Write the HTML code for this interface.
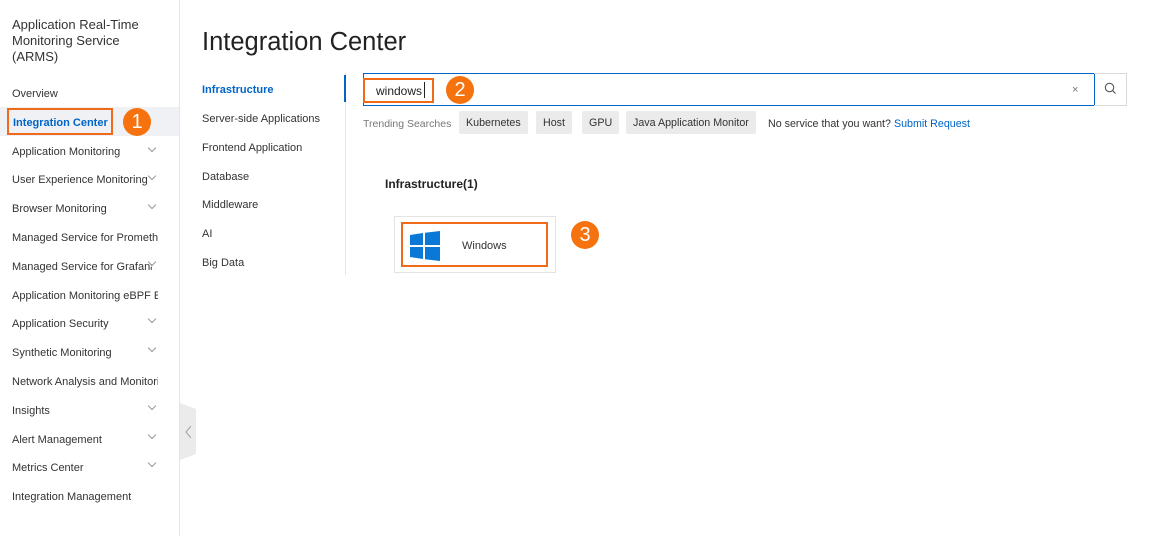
<!DOCTYPE html>
<html><head><meta charset="utf-8"><style>
*{margin:0;padding:0;box-sizing:border-box}
body{width:1153px;height:536px;background:#fff;font-family:"Liberation Sans",sans-serif;color:#333;position:relative;overflow:hidden;font-size:11px}
.a{position:absolute;white-space:nowrap}
.side{position:absolute;left:0;top:0;width:180px;height:536px;border-right:1px solid #e5e5e5}
.side .a{margin-top:1px}
.chev{position:absolute;left:149px;width:6px;height:6px;border-right:1px solid #999;border-bottom:1px solid #999;transform:rotate(45deg)}
.badge{position:absolute;width:28px;height:28px;border-radius:50%;background:#f5720f;color:#fff;font-size:20px;text-align:center;line-height:28px}
.tag{position:absolute;top:111px;height:23px;background:#ebebeb;border-radius:2px;line-height:24px;padding:0 7px;color:#333;font-size:10.7px}
</style></head><body>
<div class="side">
<div class="a" style="left:12px;top:16px;font-size:13px;line-height:16px;color:#333">Application Real-Time<br>Monitoring Service<br>(ARMS)</div>
<div class="a" style="left:12px;top:87px">Overview</div>
<div class="a" style="left:0;top:107px;width:179px;height:29px;background:#eff1f4;margin-top:0"></div>
<div class="a" style="left:7px;top:108px;width:106px;height:27px;border:2px solid #f06a1a;margin-top:0"></div>
<div class="a" style="left:13px;top:116px;color:#0064c8;font-weight:bold">Integration Center</div>
<div class="a" style="left:12px;top:145px">Application Monitoring</div><div class="chev" style="top:145px"></div>
<div class="a" style="left:12px;top:173px">User Experience Monitoring</div><div class="chev" style="top:173px"></div>
<div class="a" style="left:12px;top:202px">Browser Monitoring</div><div class="chev" style="top:202px"></div>
<div class="a" style="left:12px;top:231px;width:146px;overflow:hidden">Managed Service for Prometheus</div>
<div class="a" style="left:12px;top:260px;width:140px;overflow:hidden">Managed Service for Grafana</div><div class="chev" style="top:259px"></div>
<div class="a" style="left:12px;top:289px;width:146px;overflow:hidden">Application Monitoring eBPF Edition</div>
<div class="a" style="left:12px;top:317px">Application Security</div><div class="chev" style="top:316px"></div>
<div class="a" style="left:12px;top:346px">Synthetic Monitoring</div><div class="chev" style="top:345px"></div>
<div class="a" style="left:12px;top:375px;width:146px;overflow:hidden">Network Analysis and Monitoring</div>
<div class="a" style="left:12px;top:404px">Insights</div><div class="chev" style="top:403px"></div>
<div class="a" style="left:12px;top:433px">Alert Management</div><div class="chev" style="top:432px"></div>
<div class="a" style="left:12px;top:461px">Metrics Center</div><div class="chev" style="top:460px"></div>
<div class="a" style="left:12px;top:490px">Integration Management</div>
</div>
<div class="badge" style="left:123px;top:108px">1</div>
<svg class="a" style="left:180px;top:403px" width="17" height="57"><polygon points="0,0 16,6 16,51 0,57" fill="#ebebeb"/><polyline points="11,23 6,29 11,35" fill="none" stroke="#aaa" stroke-width="1.2"/></svg>
<div class="a" style="left:202px;top:28px;font-size:25.5px;color:#222">Integration Center</div>
<div class="a" style="left:202px;top:84px;color:#0064c8;font-weight:bold">Infrastructure</div>
<div class="a" style="left:202px;top:113px">Server-side Applications</div>
<div class="a" style="left:202px;top:142px">Frontend Application</div>
<div class="a" style="left:202px;top:171px">Database</div>
<div class="a" style="left:202px;top:199px">Middleware</div>
<div class="a" style="left:202px;top:228px">AI</div>
<div class="a" style="left:202px;top:257px">Big Data</div>
<div class="a" style="left:345px;top:73px;width:1px;height:202px;background:#e5e5e5"></div>
<div class="a" style="left:344px;top:75px;width:2px;height:27px;background:#0064c8"></div>
<div class="a" style="left:363px;top:73px;width:732px;height:33px;border:1px solid #0064c8"></div>
<div class="a" style="left:1094px;top:73px;width:33px;height:33px;border:1px solid #d9d9d9;border-left:none"></div>
<svg class="a" style="left:1104px;top:82px" width="13" height="13"><circle cx="5.5" cy="5.5" r="4.2" fill="none" stroke="#555" stroke-width="1.1"/><line x1="8.5" y1="8.5" x2="11.5" y2="11.5" stroke="#555" stroke-width="1.2"/></svg>
<div class="a" style="left:1072px;top:84px;color:#777;font-size:11px">×</div>
<div class="a" style="left:363px;top:78px;width:71px;height:25px;border:2px solid #f06a1a"></div>
<div class="a" style="left:376px;top:84px;font-size:12px;color:#222">windows</div>
<div class="a" style="left:424px;top:82px;width:1px;height:16px;background:#222"></div>
<div class="badge" style="left:446px;top:76px">2</div>
<div class="a" style="left:363px;top:118px;color:#777;font-size:10.5px">Trending Searches</div>
<div class="tag" style="left:459px">Kubernetes</div>
<div class="tag" style="left:536px">Host</div>
<div class="tag" style="left:582px">GPU</div>
<div class="tag" style="left:626px">Java Application Monitor</div>
<div class="a" style="left:768px;top:118px;font-size:10.7px">No service that you want? <span style="color:#0064c8">Submit Request</span></div>
<div class="a" style="left:385px;top:177px;font-size:12px;font-weight:bold;color:#222">Infrastructure(1)</div>
<div class="a" style="left:394px;top:216px;width:162px;height:57px;border:1px solid #e3e3e3"></div>
<div class="a" style="left:401px;top:222px;width:147px;height:45px;border:2px solid #f06a1a"></div>
<svg class="a" style="left:410px;top:231px" width="31" height="30"><polygon points="0,4 13,2 13,14 0,14" fill="#0a78d7"/><polygon points="15,1.7 30,0 30,14 15,14" fill="#0a78d7"/><polygon points="0,16 13,16 13,28 0,26" fill="#0a78d7"/><polygon points="15,16 30,16 30,30 15,28.3" fill="#0a78d7"/></svg>
<div class="a" style="left:462px;top:240px">Windows</div>
<div class="badge" style="left:571px;top:221px">3</div>
</body></html>
